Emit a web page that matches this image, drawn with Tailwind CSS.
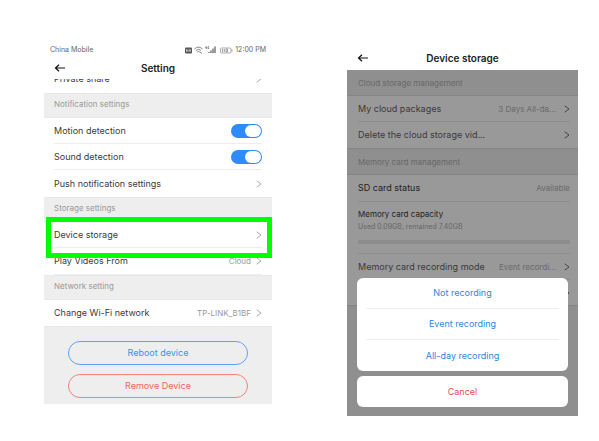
<!DOCTYPE html>
<html lang="en">
<head>
    <meta charset="UTF-8">
    <meta name="viewport" content="width=device-width, initial-scale=1.0">
    <title>Device storage settings</title>
    <script src="https://cdn.jsdelivr.net/npm/@tailwindcss/browser@4"></script>
</head>
<body class="bg-white font-['Inter','Roboto',sans-serif] text-[9px] leading-3 text-[#3a3a3a]">
    <svg class="hidden">
        <symbol id="chevron" viewBox="0 0 6 8"><path d="M1 1l4 3-4 3" fill="none" stroke="currentColor" stroke-linecap="round" stroke-linejoin="round"/></symbol>
        <symbol id="arrow" viewBox="0 0 12 8"><path d="M5 .8L1.500 4 5 7.200M1.500 4H11" fill="none" stroke="currentColor" stroke-width="1.200"/></symbol>
    </svg>

    <div class="grid grid-cols-[228fr_231fr] items-start gap-x-[75px] pl-11 pr-[21px] pt-11">
        <!-- Setting screen -->
        <main>
            <div class="flex h-3 items-center justify-between px-[6px] text-[7px] text-[#666]">
                <span>China Mobile</span>
                <div class="flex items-center gap-[2px]">
                    <svg class="h-[7px] w-[7px]" viewBox="0 0 7 7"><rect width="7" height="6" y=".5" rx="1" fill="#555"/><path d="M1.500 2v3M3 2v3M1.500 3.500H3M4.500 2.500h1v2h-1z" stroke="#ddd" stroke-width=".6" fill="none"/></svg>
                    <svg class="h-2 w-[9px]" viewBox="0 0 9 8" fill="none" stroke="#777" stroke-width=".9"><path d="M.5 3Q4.500-.8 8.500 3M1.800 4.600Q4.500 2 7 4.400M3.200 6Q4.500 5 5.800 6M6 6l2 1.500"/></svg>
                    <svg class="h-2 w-[11px]" viewBox="0 0 11 8" fill="none" stroke="#666"><path stroke-width=".6" d="M1.500 0L.3 2h1.800M1.700 1v2M4 .5H3v2h1V1.500"/><path stroke-width="1.300" d="M4 7V6M6 7V4.500M8 7V2.500M10 7V.5"/></svg>
                    <svg class="ml-[2px] h-[7px] w-[13px]" viewBox="0 0 13 7"><rect x=".5" y="1" width="10.500" height="5" rx="1" fill="none" stroke="#999" stroke-width=".8"/><path d="M2.500 2v3M4.300 2v3M6 2h1.500v3H6zM12 2.500v2" fill="none" stroke="#888" stroke-width=".8"/></svg>
                    <span>12:00 PM</span>
                </div>
            </div>
            <div class="grid h-[23px] grid-cols-3 items-center px-[10px]">
                <a href="#" aria-label="Back" class="text-[#111]"><svg class="h-2 w-3"><use href="#arrow"/></svg></a>
                <h1 class="text-center text-[10px] font-semibold text-[#222]">Setting</h1>
            </div>
            <!-- row scrolled half under the title bar -->
            <div class="flex h-[14px] items-start overflow-hidden px-[10px]">
                <div class="-mt-[6px] flex flex-1 items-center justify-between">
                    <span>Private share</span>
                    <svg class="h-2 w-[6px] text-[#aaa]"><use href="#chevron"/></svg>
                </div>
            </div>

            <h2 class="flex h-[25px] items-center border-y border-[#e8e8e8] bg-[#eee] px-[10px] pb-[3px] text-[8px] text-[#999]">Notification settings</h2>
            <div class="divide-y divide-[#eee] px-[10px]">
                <label class="flex h-[26px] items-center justify-between">
                    Motion detection
                    <input type="checkbox" role="switch" checked class="flex h-[14px] w-[31px] appearance-none items-center justify-end rounded-full bg-[#2f8bfa] pr-px after:h-3 after:w-4 after:rounded-full after:bg-white">
                </label>
                <label class="flex h-[26px] items-center justify-between">
                    Sound detection
                    <input type="checkbox" role="switch" checked class="flex h-[14px] w-[31px] appearance-none items-center justify-end rounded-full bg-[#2f8bfa] pr-px after:h-3 after:w-4 after:rounded-full after:bg-white">
                </label>
                <a href="#" class="flex h-[27px] items-center justify-between">
                    Push notification settings
                    <svg class="h-2 w-[6px] text-[#aaa]"><use href="#chevron"/></svg>
                </a>
            </div>

            <h2 class="flex h-[25px] items-center border-y border-[#e8e8e8] bg-[#eee] px-[10px] pb-[3px] text-[8px] text-[#999]">Storage settings</h2>
            <div class="relative divide-y divide-[#eee] px-[10px]">
                <a href="#" class="flex h-[26px] items-center justify-between">
                    Device storage
                    <svg class="h-2 w-[6px] text-[#aaa]"><use href="#chevron"/></svg>
                </a>
                <a href="#" class="flex h-[27px] items-center">
                    <span class="flex-1">Play Videos From</span>
                    <span class="mr-[5px] text-[8px] text-[#999]">Cloud</span>
                    <svg class="h-2 w-[6px] text-[#aaa]"><use href="#chevron"/></svg>
                </a>
                <!-- highlight around the device storage row -->
                <div class="pointer-events-none absolute -top-[5px] left-[2px] right-0 h-[41px] border-5 border-[#00ff00]"></div>
            </div>

            <h2 class="flex h-[25px] items-center border-y border-[#e8e8e8] bg-[#eee] px-[10px] pb-[3px] text-[8px] text-[#999]">Network setting</h2>
            <a href="#" class="flex h-[26px] items-center px-[10px]">
                <span class="flex-1">Change Wi-Fi network</span>
                <span class="mr-[5px] text-[8px] text-[#999]">TP-LINK_B1BF</span>
                <svg class="h-2 w-[6px] text-[#aaa]"><use href="#chevron"/></svg>
            </a>
            <div class="flex flex-col gap-[9px] border-t border-[#e8e8e8] bg-[#eee] px-6 pb-[6px] pt-[14px]">
                <button class="h-6 rounded-full border border-[#5ba3f5] text-[#3b8ff2]">Reboot device</button>
                <button class="h-6 rounded-full border border-[#f5817a] text-[#f4645c]">Remove Device</button>
            </div>
        </main>

        <!-- Device storage screen with the recording mode sheet open -->
        <section class="pt-1">
            <div class="grid h-[22px] grid-cols-[1fr_2fr_1fr] items-center px-[10px] pb-[2px]">
                <a href="#" aria-label="Back" class="text-[#111]"><svg class="h-2 w-3"><use href="#arrow"/></svg></a>
                <h1 class="text-center text-[10px] font-semibold text-[#222]">Device storage</h1>
            </div>
            <div class="relative bg-[#8f8f8f] pb-[110px]">
                <h2 class="flex h-[25px] items-center px-[11px] text-[8px] text-[#686868]">Cloud storage management</h2>
                <div class="divide-y divide-[#8d8d8d] border-y border-[#858585] bg-[#999] pl-[11px] pr-2">
                    <a href="#" class="flex h-[26px] items-center">
                        <span class="flex-1">My cloud packages</span>
                        <span class="mr-2 text-[8px] text-[#6a6a6a]">3 Days All-da...</span>
                        <svg class="h-2 w-[6px] text-[#444]"><use href="#chevron"/></svg>
                    </a>
                    <a href="#" class="flex h-[26px] items-center justify-between">
                        Delete the cloud storage vid...
                        <svg class="h-2 w-[6px] text-[#444]"><use href="#chevron"/></svg>
                    </a>
                </div>
                <h2 class="flex h-[25px] items-center px-[11px] text-[8px] text-[#686868]">Memory card management</h2>
                <div class="divide-y divide-[#8d8d8d] border-y border-[#858585] bg-[#999] pl-[11px] pr-2">
                    <div class="flex h-[27px] items-center justify-between">
                        <span class="text-[#222]">SD card status</span>
                        <span class="text-[8px] text-[#6a6a6a]">Available</span>
                    </div>
                    <div class="h-[52px] pt-[6px]">
                        <p class="text-[8px] text-[#222]">Memory card capacity</p>
                        <p class="mt-px text-[7px] text-[#666]">Used 0.09GB, remained 7.40GB</p>
                        <div class="mt-[7px] h-1 bg-[#8d8d8d]"></div>
                    </div>
                    <a href="#" class="flex h-[26px] items-center">
                        <span class="flex-1">Memory card recording mode</span>
                        <span class="mr-2 text-[8px] text-[#6a6a6a]">Event recordi...</span>
                        <svg class="h-2 w-[6px] text-[#444]"><use href="#chevron"/></svg>
                    </a>
                    <div class="flex h-[25px] items-center justify-end">
                        <svg class="h-2 w-[6px] text-[#444]"><use href="#chevron"/></svg>
                    </div>
                </div>

                <div role="dialog" aria-label="Memory card recording mode" class="absolute inset-x-[10px] bottom-[9px] flex flex-col gap-[5px] text-[#2f86dc]">
                    <div class="flex flex-col divide-y divide-[#eee] rounded-md bg-white px-[9px]">
                        <button class="h-[31px]">Not recording</button>
                        <button class="h-[31px]">Event recording</button>
                        <button class="h-[31px]">All-day recording</button>
                    </div>
                    <button class="h-[31px] rounded-md bg-white text-[#e8503f]">Cancel</button>
                </div>
            </div>
        </section>
    </div>
</body>
</html>
